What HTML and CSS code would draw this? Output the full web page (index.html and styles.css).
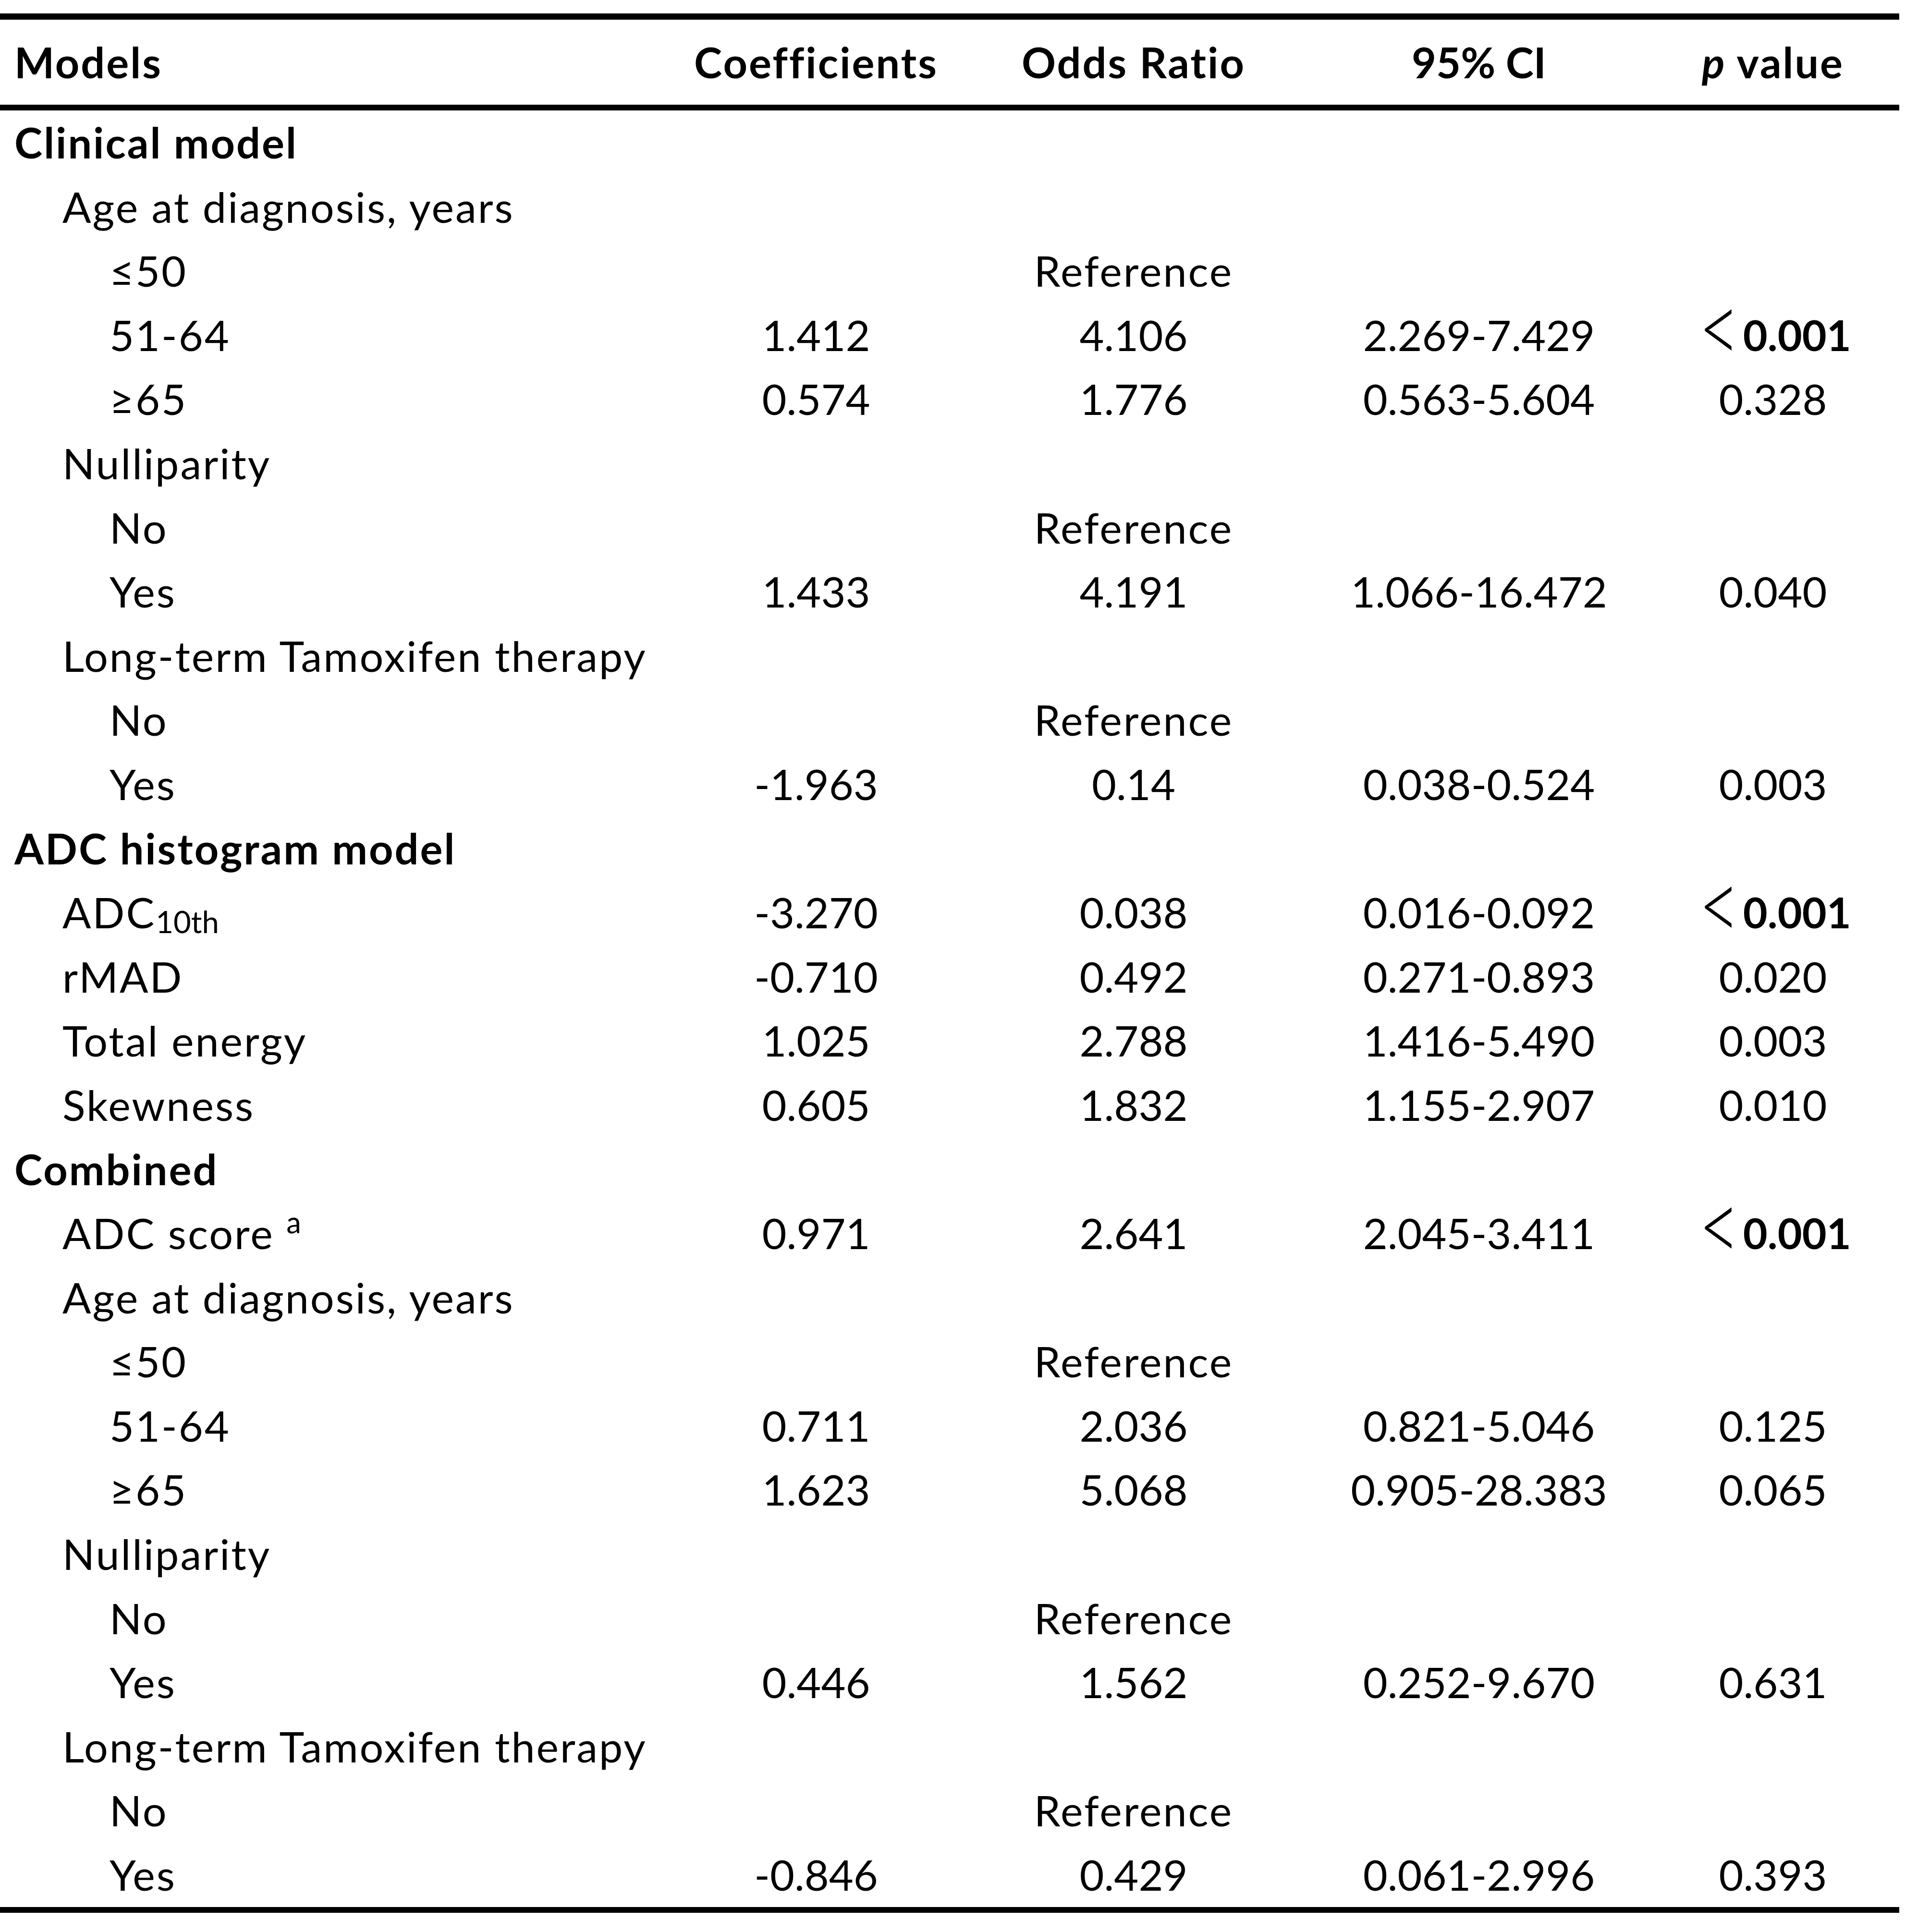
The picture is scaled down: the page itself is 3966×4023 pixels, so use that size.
FILE: index.html
```html
<!DOCTYPE html>
<html lang="en">
<head>
<meta charset="utf-8">
<title>Logistic regression models</title>
<link rel="stylesheet" href="styles.css">
</head>
<body>
<table class="results">
  <colgroup>
    <col class="col-model">
    <col class="col-coef">
    <col class="col-or">
    <col class="col-ci">
    <col class="col-p">
  </colgroup>
  <thead>
    <tr>
      <th class="label txt">Models</th>
      <th class="txt">Coefficients</th>
      <th class="txt">Odds Ratio</th>
      <th>95% CI</th>
      <th class="txt"><i>p</i> value</th>
    </tr>
  </thead>
  <tbody>
    <tr class="section"><td class="label">Clinical model</td><td></td><td></td><td></td><td></td></tr>
    <tr><td class="label l1">Age at diagnosis, years</td><td></td><td></td><td></td><td></td></tr>
    <tr><td class="label l2">≤50</td><td></td><td class="txt">Reference</td><td></td><td></td></tr>
    <tr><td class="label l2">51-64</td><td>1.412</td><td>4.106</td><td>2.269-7.429</td><td><span class="lt">&lt;</span><b>0.001</b></td></tr>
    <tr><td class="label l2">≥65</td><td>0.574</td><td>1.776</td><td>0.563-5.604</td><td>0.328</td></tr>
    <tr><td class="label l1">Nulliparity</td><td></td><td></td><td></td><td></td></tr>
    <tr><td class="label l2">No</td><td></td><td class="txt">Reference</td><td></td><td></td></tr>
    <tr><td class="label l2">Yes</td><td>1.433</td><td>4.191</td><td>1.066-16.472</td><td>0.040</td></tr>
    <tr><td class="label l1">Long-term Tamoxifen therapy</td><td></td><td></td><td></td><td></td></tr>
    <tr><td class="label l2">No</td><td></td><td class="txt">Reference</td><td></td><td></td></tr>
    <tr><td class="label l2">Yes</td><td>-1.963</td><td>0.14</td><td>0.038-0.524</td><td>0.003</td></tr>
    <tr class="section"><td class="label">ADC histogram model</td><td></td><td></td><td></td><td></td></tr>
    <tr><td class="label l1">ADC<sub class="sub">10th</sub></td><td>-3.270</td><td>0.038</td><td>0.016-0.092</td><td><span class="lt">&lt;</span><b>0.001</b></td></tr>
    <tr><td class="label l1">rMAD</td><td>-0.710</td><td>0.492</td><td>0.271-0.893</td><td>0.020</td></tr>
    <tr><td class="label l1">Total energy</td><td>1.025</td><td>2.788</td><td>1.416-5.490</td><td>0.003</td></tr>
    <tr><td class="label l1">Skewness</td><td>0.605</td><td>1.832</td><td>1.155-2.907</td><td>0.010</td></tr>
    <tr class="section"><td class="label">Combined</td><td></td><td></td><td></td><td></td></tr>
    <tr><td class="label l1">ADC score <sup class="sup">a</sup></td><td>0.971</td><td>2.641</td><td>2.045-3.411</td><td><span class="lt">&lt;</span><b>0.001</b></td></tr>
    <tr><td class="label l1">Age at diagnosis, years</td><td></td><td></td><td></td><td></td></tr>
    <tr><td class="label l2">≤50</td><td></td><td class="txt">Reference</td><td></td><td></td></tr>
    <tr><td class="label l2">51-64</td><td>0.711</td><td>2.036</td><td>0.821-5.046</td><td>0.125</td></tr>
    <tr><td class="label l2">≥65</td><td>1.623</td><td>5.068</td><td>0.905-28.383</td><td>0.065</td></tr>
    <tr><td class="label l1">Nulliparity</td><td></td><td></td><td></td><td></td></tr>
    <tr><td class="label l2">No</td><td></td><td class="txt">Reference</td><td></td><td></td></tr>
    <tr><td class="label l2">Yes</td><td>0.446</td><td>1.562</td><td>0.252-9.670</td><td>0.631</td></tr>
    <tr><td class="label l1">Long-term Tamoxifen therapy</td><td></td><td></td><td></td><td></td></tr>
    <tr><td class="label l2">No</td><td></td><td class="txt">Reference</td><td></td><td></td></tr>
    <tr><td class="label l2">Yes</td><td>-0.846</td><td>0.429</td><td>0.061-2.996</td><td>0.393</td></tr>
  </tbody>
</table>
</body>
</html>
```
FILE: styles.css
```css
html, body {
  margin: 0;
  padding: 0;
  background: #ffffff;
}

body {
  color: #000000;
  font-family: Lato, "Open Sans", "Liberation Sans", sans-serif;
  font-size: 88px;
}

.results {
  margin-top: 28px;
  width: 3954px;
  table-layout: fixed;
  border-collapse: separate;
  border-spacing: 0;
}

.col-model { width: 1408px; }
.col-coef { width: 582px; }
.col-or { width: 740px; }
.col-ci { width: 698px; }
.col-p { width: 526px; }

.results th {
  padding: 0;
  font-weight: 700;
  line-height: 177px;
  text-align: center;
  white-space: nowrap;
  border-top: 13px solid #000000;
  border-bottom: 12px solid #000000;
}

.results td {
  padding: 0;
  font-weight: 400;
  line-height: 133.6px;
  text-align: center;
  white-space: nowrap;
}

.results th.label,
.results td.label {
  text-align: left;
  padding-left: 30px;
  letter-spacing: 3px;
}

.results .txt {
  letter-spacing: 3px;
}

.results td.l1 { padding-left: 130px; }
.results td.l2 { padding-left: 228px; }

.results tr.section td.label { font-weight: 700; }

.results tbody tr:last-child td {
  border-bottom: 12px solid #000000;
}

.sub {
  font-size: 0.72em;
  line-height: 0;
  letter-spacing: 0;
  vertical-align: -10px;
}

.sup {
  font-size: 0.7em;
  line-height: 0;
  vertical-align: 33px;
}

.lt {
  display: inline-block;
  font-weight: 300;
  font-size: 2.4em;
  line-height: 0;
  margin-left: -10px;
  margin-right: -12px;
  vertical-align: -27px;
  transform: scaleX(0.7);
}

.results b { font-weight: 700; }
```
